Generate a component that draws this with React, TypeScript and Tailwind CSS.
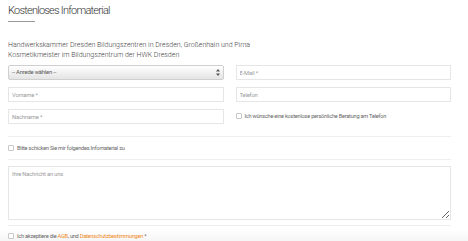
const FONT = { fontFamily: "Roboto, 'Liberation Sans', sans-serif" };

function Field({ placeholder }: { placeholder: string }) {
  return (
    <input
      placeholder={placeholder}
      className="h-[15px] w-full border border-[#e6e6e6] bg-white px-[3px] text-[5.8px] tracking-[-0.03em] text-[#555] placeholder:text-[#9a9a9a] outline-none"
    />
  );
}

function Check({ children }: { children: React.ReactNode }) {
  return (
    <label className="flex items-center gap-[3px] text-[5.6px] tracking-[-0.04em] text-[#666]">
      <span className="h-[6px] w-[6px] rounded-[1px] border border-[#c8c8c8] bg-white" />
      <span>{children}</span>
    </label>
  );
}

export default function App() {
  return (
    <div className="h-[241px] w-[468px] overflow-hidden bg-white" style={FONT}>
      <div className="w-[451px] pl-[8px]">
        <h2 className="pt-[3px] text-[11px] font-light leading-[16px] tracking-[-0.07em] text-[#333]">
          Kostenloses Infomaterial
        </h2>
        <div className="mt-[2px] h-px w-[27px] bg-[#999]" />

        <div className="mt-[18px] text-[7px] font-light leading-[10px] text-[#444]">
          <p>Handwerkskammer Dresden Bildungszentren in Dresden, Großenhain und Pirna</p>
          <p>Kosmetikmeister im Bildungszentrum der HWK Dresden</p>
        </div>

        <div className="mt-[5px] grid grid-cols-2 gap-x-[12px]">
          <div className="flex flex-col gap-[7px]">
            <div className="flex h-[15px] items-center justify-between rounded-[2px] border border-[#cfcfcf] bg-gradient-to-b from-white to-[#e4e4e4] px-[3px] text-[5.8px] tracking-[-0.03em] text-[#555]">
              <span>-- Anrede wählen --</span>
              <svg width="4" height="7" viewBox="0 0 4 7" className="fill-[#555]">
                <path d="M2 0 L4 2.6 H0 Z" />
                <path d="M2 7 L4 4.4 H0 Z" />
              </svg>
            </div>
            <Field placeholder="Vorname *" />
            <Field placeholder="Nachname *" />
          </div>
          <div className="flex flex-col gap-[7px]">
            <Field placeholder="E-Mail *" />
            <Field placeholder="Telefon" />
            <div className="flex h-[15px] items-center">
              <Check>Ich wünsche eine kostenlose persönliche Beratung am Telefon</Check>
            </div>
          </div>
        </div>

        <div className="mt-[12px] h-px bg-[#eeeeee]" />
        <div className="flex h-[22px] items-center">
          <Check>Bitte schicken Sie mir folgendes Infomaterial zu</Check>
        </div>
        <div className="h-px bg-[#eeeeee]" />

        <textarea
          placeholder="Ihre Nachricht an uns"
          className="mt-[6px] block h-[54px] w-full resize-y border border-[#e6e6e6] px-[3px] py-[3px] text-[5.8px] tracking-[-0.03em] text-[#555] placeholder:text-[#9a9a9a] outline-none"
        />

        <div className="mt-[5px] h-px bg-[#eeeeee]" />
      </div>
      <div className="mt-[3px] h-[16px] bg-gradient-to-b from-white to-[#f2f2f2] pl-[8px] pt-[3px]">
        <Check>
          Ich akzeptiere die <span className="text-[#f08a24]">AGB</span>, und{" "}
          <span className="text-[#f08a24]">Datenschutzbestimmungen</span> *
        </Check>
      </div>
    </div>
  );
}
